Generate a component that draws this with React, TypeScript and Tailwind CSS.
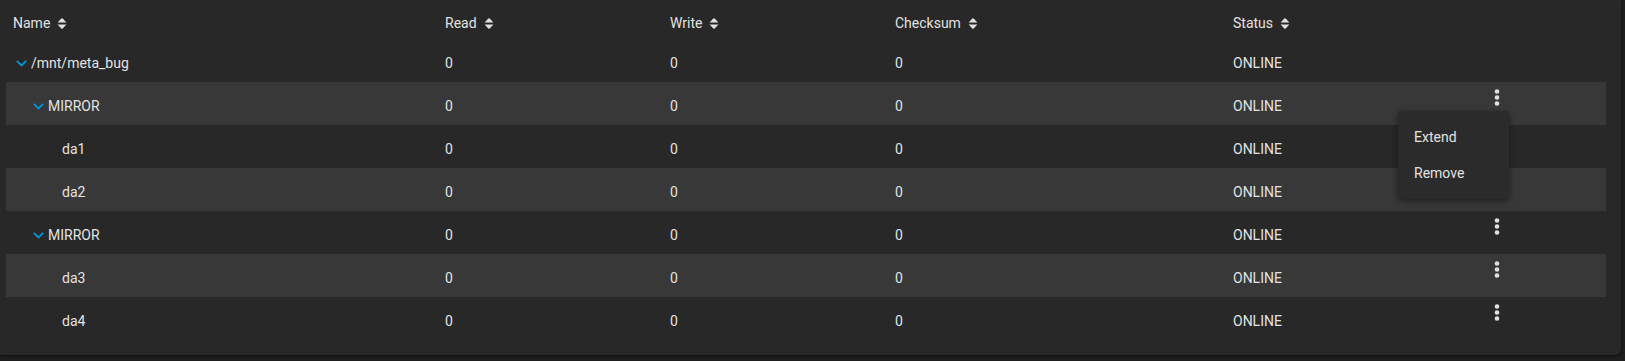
import React from "react";

type Row = {
  name: string;
  level: 0 | 1 | 2;
  expandable?: boolean;
  actions?: boolean;
};

const rows: Row[] = [
  { name: "/mnt/meta_bug", level: 0, expandable: true },
  { name: "MIRROR", level: 1, expandable: true, actions: true },
  { name: "da1", level: 2 },
  { name: "da2", level: 2 },
  { name: "MIRROR", level: 1, expandable: true, actions: true },
  { name: "da3", level: 2, actions: true },
  { name: "da4", level: 2, actions: true },
];

const SortIcon = () => (
  <svg width="10" height="11" viewBox="0 0 10 11" className="ml-[7px] shrink-0" fill="#e0e0e0">
    <path d="M0.6 4.6 L4.3 0.6 Q5 0 5.7 0.6 L9.4 4.6 Z" />
    <path d="M0.6 6.4 L9.4 6.4 L5.7 10.4 Q5 11 4.3 10.4 Z" />
  </svg>
);

// expand chevron, drawn as a stroke so it reads a bit heavier
const Chevron = () => (
  <span className="w-[18px] h-[18px] flex items-center justify-center shrink-0">
    <svg width="11" height="7" viewBox="0 0 11 7" fill="none" stroke="#0095d5" strokeWidth="1.9">
      <path d="M0.8 0.9 L5.5 5.5 L10.2 0.9" />
    </svg>
  </span>
);

const MoreVert = () => (
  <svg width="24" height="24" viewBox="0 0 24 24" fill="#e0e0e0">
    <circle cx="12" cy="5.5" r="2.3" />
    <circle cx="12" cy="11.5" r="2.3" />
    <circle cx="12" cy="17.5" r="2.3" />
  </svg>
);

const cols = "grid grid-cols-[432px_225px_225px_338px_252px_24px_1fr]";

const indent = ["pl-[6px]", "pl-[23px]", "pl-[56px]"];

export default function App() {
  return (
    <div
      className="relative w-full h-[361px] bg-[#1e1e1e] text-[14px] text-[#e2e2e2] overflow-hidden"
      style={{ fontFamily: "Roboto, 'Liberation Sans', sans-serif" }}
    >
      <div className="w-[1621px] h-[355px] bg-[#282828] rounded-br-[6px] rounded-bl-[2px] pl-[6px] pr-[15px] shadow-[0_1px_3px_rgba(0,0,0,0.5)]">
        {/* header */}
        <div className={`${cols} h-[39px] pt-[8px] items-center pl-[7px]`}>
          {["Name", "Read", "Write", "Checksum", "Status"].map((h) => (
            <div key={h} className="flex items-center">
              <span>{h}</span>
              <SortIcon />
            </div>
          ))}
        </div>

        {/* rows */}
        {rows.map((r, i) => (
          <div
            key={i}
            className={`${cols} h-[43px] pt-[5px] items-center pl-[7px] ${i % 2 === 1 ? "bg-[#383838]" : ""}`}
          >
            <div className={`flex items-center -ml-[7px] ${indent[r.level]}`}>
              {r.expandable && <Chevron />}
              <span className={r.expandable ? "ml-[1px]" : ""}>{r.name}</span>
            </div>
            <div>0</div>
            <div>0</div>
            <div>0</div>
            <div>ONLINE</div>
            <div className="self-start -mt-[1px] h-[24px]">{r.actions && <MoreVert />}</div>
            <div />
          </div>
        ))}
      </div>

      {/* open action menu */}
      <div className="absolute left-[1398px] top-[111px] w-[111px] py-[8px] bg-[#2b2b2b] rounded-[4px] shadow-[0_2px_6px_rgba(0,0,0,0.45)]">
        <div className="h-[36px] flex items-center px-[16px]">Extend</div>
        <div className="h-[36px] flex items-center px-[16px]">Remove</div>
      </div>
    </div>
  );
}
